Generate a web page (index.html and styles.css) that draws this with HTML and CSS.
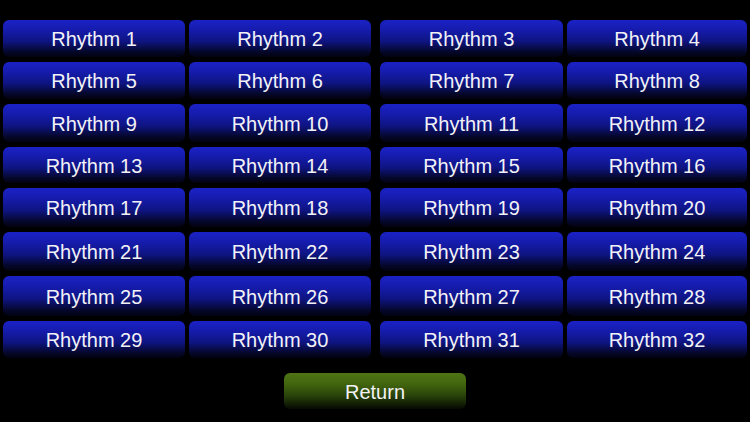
FILE: index.html
```html
<!DOCTYPE html>
<html>
<head>
<meta charset="utf-8">
<link rel="stylesheet" href="styles.css">
</head>
<body>
<div class="page">
  <div class="board">
    <div class="half">
      <div class="btn">Rhythm 1</div><div class="btn">Rhythm 2</div>
      <div class="btn">Rhythm 5</div><div class="btn">Rhythm 6</div>
      <div class="btn">Rhythm 9</div><div class="btn">Rhythm 10</div>
      <div class="btn">Rhythm 13</div><div class="btn">Rhythm 14</div>
      <div class="btn">Rhythm 17</div><div class="btn">Rhythm 18</div>
      <div class="btn">Rhythm 21</div><div class="btn">Rhythm 22</div>
      <div class="btn">Rhythm 25</div><div class="btn">Rhythm 26</div>
      <div class="btn">Rhythm 29</div><div class="btn">Rhythm 30</div>
    </div>
    <div class="half right">
      <div class="btn">Rhythm 3</div><div class="btn">Rhythm 4</div>
      <div class="btn">Rhythm 7</div><div class="btn">Rhythm 8</div>
      <div class="btn">Rhythm 11</div><div class="btn">Rhythm 12</div>
      <div class="btn">Rhythm 15</div><div class="btn">Rhythm 16</div>
      <div class="btn">Rhythm 19</div><div class="btn">Rhythm 20</div>
      <div class="btn">Rhythm 23</div><div class="btn">Rhythm 24</div>
      <div class="btn">Rhythm 27</div><div class="btn">Rhythm 28</div>
      <div class="btn">Rhythm 31</div><div class="btn">Rhythm 32</div>
    </div>
  </div>
  <div class="footer">
    <div class="btn return">Return</div>
  </div>
</div>
</body>
</html>
```
FILE: styles.css
```css
html, body {
  margin: 0;
  padding: 0;
  background: #000;
}
.page {
  width: 750px;
  height: 422px;
  background: #000;
  padding-top: 20px;
  box-sizing: border-box;
  font-family: "Liberation Sans", Arial, sans-serif;
}
.board {
  display: flex;
  gap: 9px;
  padding-left: 3px;
}
.half {
  display: grid;
  grid-template-columns: 182px 182px;
  grid-template-rows: 37px 37px 38px 36px 39px 39px 40px 37px;
  column-gap: 4px;
  row-gap: 5px;
}
.half.right {
  grid-template-columns: 183px 180px;
}
.btn {
  display: flex;
  align-items: center;
  justify-content: center;
  border-radius: 6px;
  background: linear-gradient(to bottom, #1a22c6 0%, #161cae 25%, #0e1480 58%, #05072a 86%, #020210 100%);
  color: #f2f2f6;
  font-size: 20px;
  line-height: 1;
  padding-top: 1px;
  box-sizing: border-box;
}
.footer {
  display: flex;
  justify-content: center;
  padding-top: 15px;
}
.return {
  width: 182px;
  height: 36px;
  background: linear-gradient(to bottom, #4e7414 0%, #42660f 30%, #2a440a 62%, #0e1804 90%, #060a02 100%);
}
```
